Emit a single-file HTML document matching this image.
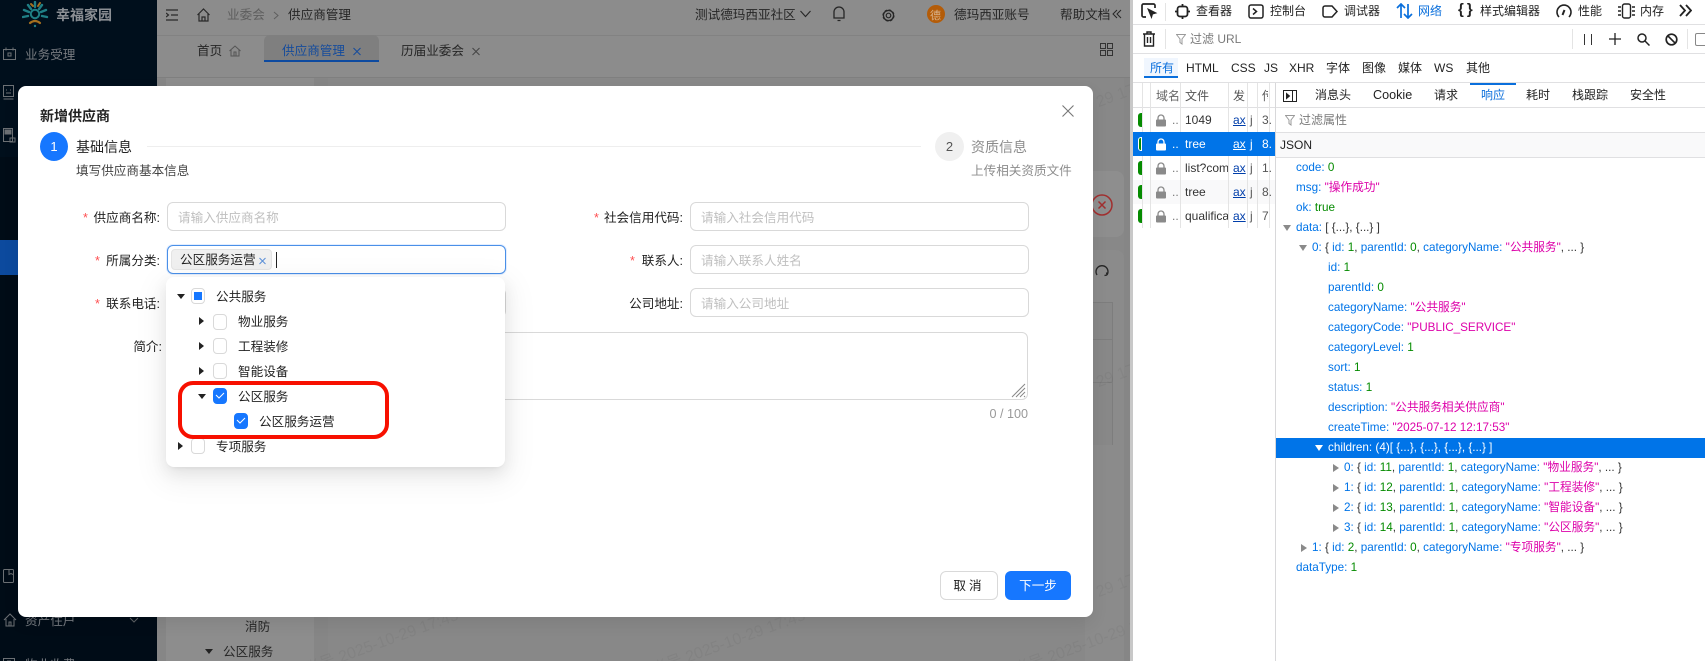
<!DOCTYPE html>
<html lang="zh"><head><meta charset="utf-8"><title>新增供应商</title>
<style>
*{box-sizing:border-box}
html,body{margin:0;padding:0;width:1705px;height:661px;overflow:hidden;background:#fff;font-family:"Liberation Sans","Noto Sans CJK SC",sans-serif}
#w{position:absolute;left:0;top:0;width:1705px;height:661px;overflow:hidden}
.a{position:absolute}
.t{position:absolute;white-space:nowrap;line-height:20px;height:20px;font-size:12.6px;color:#222;margin-top:1px}
.r{text-align:right}
.s{color:#ff4d4f}
.in{position:absolute;border:1px solid #d9d9d9;border-radius:6px;background:#fff}
.ph{color:#bfbfbf}
.cb{position:absolute;width:14px;height:16px;border:1px solid #d9d9d9;border-radius:4px;background:#fff}
.cb.on{background:#1677ff;border-color:#1677ff}
.ar{position:absolute;width:0;height:0}
.ar.d{border-left:4px solid transparent;border-right:4px solid transparent;border-top:5px solid #222}
.ar.g{border-top:4px solid transparent;border-bottom:4px solid transparent;border-left:5px solid #222}
.wm{position:absolute;white-space:nowrap;font-size:16px;color:rgba(0,0,0,.045);transform:rotate(-20deg);transform-origin:left top}
.t.d{font-size:12px;color:#222;margin-top:0}
.k{color:#0074e8}.n{color:#058b00}.v{color:#dd00a9}
.j{position:absolute;white-space:nowrap;font-size:11.7px;line-height:20px;height:20px;color:#0074e8}
.j span{color:#333}.j span.n{color:#058b00}.j span.v{color:#dd00a9}
.sel{color:#fff}
.vl{position:absolute;width:1px;background:#e4e4e4}
.hl{position:absolute;height:1px;background:#e0e0e2}
.tw{position:absolute;width:0;height:0;border-top:4.5px solid transparent;border-bottom:4.5px solid transparent;border-left:6px solid #8a8a8a}
.tb{position:absolute;width:0;height:0;border-left:4.5px solid transparent;border-right:4.5px solid transparent;border-top:6px solid #8a8a8a}
</style></head><body><div id="w">

<!-- app background -->
<div class="a" style="left:0;top:0;width:1130px;height:661px;background:#868686"></div>
<div class="a" style="left:0;top:0;width:157px;height:661px;background:#000c17"></div>
<div class="a" style="left:0;top:0;width:157px;height:157px;background:#000f1c"></div>
<div class="a" style="left:0;top:240px;width:157px;height:35px;background:#0c4a9e"></div>
<div class="a" style="left:157px;top:0;width:973px;height:36px;background:#8c8c8c;border-bottom:1px solid #828282"></div>
<div class="a" style="left:157px;top:36px;width:973px;height:42px;background:#8c8c8c;border-bottom:1px solid #7f7f7f"></div>
<div class="a" style="left:166px;top:78px;width:148px;height:583px;background:#8d8d8d"></div>
<div class="a" style="left:328px;top:78px;width:796px;height:583px;background:#888"></div>
<div class="a" style="left:1085px;top:171px;width:39px;height:66px;background:#8e8e8e;border-radius:0 8px 8px 0"></div>
<div class="a" style="left:1085px;top:250px;width:39px;height:411px;background:#8b8b8b;border-radius:0 8px 0 0"></div>
<div class="a" style="left:1085px;top:302px;width:28px;height:143px;border-right:1px solid #7d7d7d;background:#888"></div>
<div class="hl" style="left:1085px;top:302px;width:28px;background:#7d7d7d"></div>
<div class="hl" style="left:1085px;top:339px;width:28px;background:#7d7d7d"></div>
<div class="hl" style="left:1085px;top:382px;width:28px;background:#7d7d7d"></div>
<div class="wm" style="left:1094px;top:95px">29 17:45</div>
<div class="wm" style="left:1094px;top:375px">29 17:45</div>
<div class="wm" style="left:1094px;top:585px">29 17:45</div>
<div class="wm" style="left:270px;top:668px">西亚账号 2025-10-29 17:45</div>
<div class="wm" style="left:617px;top:668px">西亚账号 2025-10-29 17:45</div>
<div class="wm" style="left:979px;top:668px">西亚账号 2025-10-29 17:45</div>

<!-- sidebar -->
<svg class="a" style="left:22px;top:1px" width="28" height="27" viewBox="0 0 28 27" fill="none" stroke-linecap="round">
<circle cx="13" cy="13" r="4.2" stroke="#1f7f85" stroke-width="2"/>
<path d="M13 1v5M6 4l3 4M20 4l-3 4" stroke="#1f7f85" stroke-width="2.4"/>
<path d="M9 3l2 2M18 2l-2 3" stroke="#a5701f" stroke-width="2"/>
<path d="M2 9l5 2M1 16l5-1M24 9l-5 2M25 16l-5-1" stroke="#1f7f85" stroke-width="2.4"/>
<path d="M8 22q5-4 10 0" stroke="#a5701f" stroke-width="2.2"/>
<circle cx="13" cy="25" r="1.2" fill="#1f7f85"/>
</svg>
<div class="t" style="left:56px;top:4px;font-size:14px;font-weight:700;color:#8b8f94">幸福家园</div>
<svg class="a" style="left:3px;top:47px" width="14" height="14" fill="none" stroke="#6c7074"><rect x=".5" y="2.5" width="12" height="10"/><path d="M3 .5v3M10 .5v3M5 6h3v3H5z"/></svg>
<div class="t" style="left:25px;top:44px;color:#777b80">业务受理</div>
<svg class="a" style="left:3px;top:85px" width="12" height="16" fill="none" stroke="#6c7074"><rect x=".5" y=".5" width="10" height="11"/><path d="M3 5h1M7 5h1M3 8h5M.5 14h10"/></svg>
<svg class="a" style="left:3px;top:128px" width="13" height="15" fill="none" stroke="#6c7074"><path d="M.5.5h9v13h-9z"/><path d="M2 2h6v4H2z" fill="#6c7074"/><path d="M7 10h5v4H7z"/></svg>
<svg class="a" style="left:3px;top:569px" width="12" height="15" fill="none" stroke="#6c7074"><rect x=".5" y=".5" width="10" height="13" rx="1"/><path d="M6 .5v5l2-1 2 1"/></svg>

<svg class="a" style="left:3px;top:613px" width="14" height="14" fill="none" stroke="#6c7074"><path d="M1 7l6-6 6 6M3 6v7h8V6M6 13V9h2v4"/></svg>
<div class="t" style="left:25px;top:610px;color:#777b80">资产住户</div>
<svg class="a" style="left:129px;top:617px" width="10" height="6" fill="none" stroke="#5c6064"><path d="M1 1l4 4 4-4"/></svg>
<svg class="a" style="left:3px;top:658px" width="14" height="8" fill="none" stroke="#6c7074"><path d="M.5 7V.5h11V7M4 3h4"/></svg>
<div class="t" style="left:25px;top:654px;color:#777b80">物业收费</div>
<svg class="a" style="left:129px;top:661px" width="10" height="6" fill="none" stroke="#5c6064"><path d="M1 1l4 4 4-4"/></svg>

<!-- top bar -->
<svg class="a" style="left:166px;top:9px" width="13" height="12" fill="none" stroke="#2a2a2a" stroke-width="1.2"><path d="M0 1h12M5 6h7M0 11h12M0 4l2.500 2L0 8"/></svg>
<svg class="a" style="left:197px;top:8px" width="13" height="14" fill="none" stroke="#2a2a2a" stroke-width="1.2"><path d="M.5 7L6.500 1l6 6M2 6v7h9V6M5 13V9h3v4"/></svg>
<div class="t" style="left:227px;top:4px;color:#5e5e5e">业委会</div>
<svg class="a" style="left:273px;top:11px" width="7" height="9" fill="none" stroke="#5e5e5e"><path d="M1 1l4 3.500L1 8"/></svg>
<div class="t" style="left:288px;top:4px;color:#262626">供应商管理</div>
<div class="t" style="left:695px;top:4px;color:#262626">测试德玛西亚社区</div>
<svg class="a" style="left:800px;top:10px" width="11" height="8" fill="none" stroke="#262626" stroke-width="1.1"><path d="M.5 1l5 5.500 5-5.500"/></svg>
<svg class="a" style="left:833px;top:6px" width="12" height="16" fill="none" stroke="#262626" stroke-width="1.300"><path d="M1 12V6a5 5 0 0 1 10 0v6zM4.500 14.500h3M.5 12h11"/></svg>
<svg class="a" style="left:881px;top:8px" width="15" height="15" fill="none" stroke="#262626" stroke-width="1.200"><circle cx="7.500" cy="7.500" r="5.500" stroke-dasharray="3 1.300"/><circle cx="7.500" cy="7.500" r="5"/><circle cx="7.500" cy="7.500" r="2.300"/></svg>
<div class="a" style="left:927px;top:5px;width:18px;height:18px;border-radius:50%;background:#b45c08"></div>
<div class="t" style="left:930px;top:5px;width:12px;font-size:11px;color:#d9b48f">德</div>
<div class="t" style="left:954px;top:4px;color:#262626">德玛西亚账号</div>
<div class="t" style="left:1060px;top:4px;color:#262626">帮助文档</div>
<svg class="a" style="left:1112px;top:9px" width="10" height="10" fill="none" stroke="#262626"><path d="M5 1L1 5l4 4M9 1L5 5l4 4"/></svg>

<!-- tabs -->
<div class="t" style="left:197px;top:40px;color:#262626">首页</div>
<svg class="a" style="left:229px;top:45px" width="12" height="12" fill="none" stroke="#555"><path d="M.5 6L6 1l5.500 5M2 5v6h8V5M5 11V7h2v4"/></svg>
<div class="a" style="left:264px;top:35px;width:115px;height:27px;background:#7f7f7f;border-radius:6px 6px 0 0;border-bottom:2px solid #0d4aa0"></div>
<div class="t" style="left:282px;top:40px;color:#164c9c">供应商管理</div>
<svg class="a" style="left:353px;top:47px" width="8" height="9" fill="none" stroke="#164c9c"><path d="M.5 1l7 7M7.500 1l-7 7"/></svg>
<div class="t" style="left:401px;top:40px;color:#262626">历届业委会</div>
<svg class="a" style="left:472px;top:47px" width="8" height="9" fill="none" stroke="#444"><path d="M.5 1l7 7M7.500 1l-7 7"/></svg>
<svg class="a" style="left:1100px;top:43px" width="13" height="13" fill="none" stroke="#333"><rect x=".5" y=".5" width="5" height="5"/><rect x="7.500" y=".5" width="5" height="5"/><rect x=".5" y="7.500" width="5" height="5"/><rect x="7.500" y="7.500" width="5" height="5"/></svg>

<div class="t" style="left:245px;top:616px;color:#262626;font-size:12.600px">消防</div>
<div class="ar d" style="left:205px;top:649px;border-top-color:#222"></div>
<div class="t" style="left:223px;top:641px;color:#262626">公区服务</div>

<svg class="a" style="left:1092px;top:193px" width="22" height="24" fill="none" stroke="#a12f2f" stroke-width="1.500"><circle cx="10" cy="12" r="10"/><path d="M6.500 8.500l7 7M13.500 8.500l-7 7"/></svg>
<svg class="a" style="left:1095px;top:264px" width="14" height="15" fill="none" stroke="#262626" stroke-width="1.300"><path d="M2 11a6 6 0 1 1 10 0M12 11l-.5-2.500M12 11l-2.500.5"/></svg>

<!-- modal -->
<div class="a" style="left:18px;top:86px;width:1075px;height:531px;background:#fff;border-radius:8px;box-shadow:0 6px 16px rgba(0,0,0,.08)"></div>
<div class="t" style="left:40px;top:105px;font-size:14px;font-weight:700;color:#222">新增供应商</div>
<svg class="a" style="left:1062px;top:105px" width="12" height="12" fill="none" stroke="#777" stroke-width="1.100"><path d="M.5.5l11 11M11.500.5l-11 11"/></svg>

<div class="a" style="left:40px;top:132px;width:28px;height:29px;border-radius:50%;background:#1677ff"></div>
<div class="t" style="left:40px;top:137px;width:28px;text-align:center;color:#fff;font-size:13px;margin-top:0">1</div>
<div class="t" style="left:76px;top:137px;font-size:14px;color:#222;margin-top:0">基础信息</div>
<div class="t" style="left:76px;top:161px;color:#444;margin-top:0">填写供应商基本信息</div>
<div class="hl" style="left:147px;top:146px;width:774px;background:#eee"></div>
<div class="a" style="left:935px;top:132px;width:29px;height:29px;border-radius:50%;background:#f0f0f0"></div>
<div class="t" style="left:935px;top:137px;width:29px;text-align:center;color:#555;font-size:13px;margin-top:0">2</div>
<div class="t" style="left:971px;top:137px;font-size:14px;color:#8c8c8c;margin-top:0">资质信息</div>
<div class="t" style="left:971px;top:161px;color:#8c8c8c;margin-top:0">上传相关资质文件</div>

<!-- form left -->
<div class="t s" style="left:83px;top:207px">*</div>
<div class="t r" style="left:60px;top:207px;width:100px">供应商名称:</div>
<div class="in" style="left:167px;top:202px;width:339px;height:29px"></div>
<div class="t ph" style="left:178px;top:207px">请输入供应商名称</div>

<div class="t s" style="left:95px;top:250px">*</div>
<div class="t r" style="left:60px;top:250px;width:100px">所属分类:</div>
<div class="in" style="left:167px;top:245px;width:339px;height:29px;border-color:#4a90e8;box-shadow:0 0 0 1px rgba(22,119,255,.12)"></div>
<div class="a" style="left:171px;top:249px;width:101px;height:21px;background:#f0f0f0;border:1px solid #e4e4e4;border-radius:4px"></div>
<div class="t" style="left:180px;top:250px;margin-top:0">公区服务运营</div>
<svg class="a" style="left:259px;top:257px" width="7" height="8" fill="none" stroke="#5a8fd8"><path d="M.5 1l6 6M6.500 1l-6 6"/></svg>
<div class="a" style="left:276px;top:252px;width:1px;height:16px;background:#222"></div>

<div class="t s" style="left:95px;top:293px">*</div>
<div class="t r" style="left:60px;top:293px;width:100px">联系电话:</div>
<div class="in" style="left:167px;top:288px;width:339px;height:29px"></div>

<div class="t r" style="left:60px;top:336px;width:102px">简介:</div>
<div class="in" style="left:167px;top:332px;width:861px;height:68px"></div>
<svg class="a" style="left:1011px;top:383px" width="15" height="15" stroke="#888" stroke-width="1"><path d="M1 14L14 1M5 14l9-9M9 14l5-5M13 14l1-1"/></svg>
<div class="t r" style="left:928px;top:403px;width:100px;color:#999">0 / 100</div>

<!-- form right -->
<div class="t s" style="left:594px;top:207px">*</div>
<div class="t r" style="left:583px;top:207px;width:100px">社会信用代码:</div>
<div class="in" style="left:690px;top:202px;width:339px;height:29px"></div>
<div class="t ph" style="left:701px;top:207px">请输入社会信用代码</div>
<div class="t s" style="left:630px;top:250px">*</div>
<div class="t r" style="left:583px;top:250px;width:100px">联系人:</div>
<div class="in" style="left:690px;top:245px;width:339px;height:29px"></div>
<div class="t ph" style="left:701px;top:250px">请输入联系人姓名</div>
<div class="t r" style="left:583px;top:293px;width:100px">公司地址:</div>
<div class="in" style="left:690px;top:288px;width:339px;height:29px"></div>
<div class="t ph" style="left:701px;top:293px">请输入公司地址</div>

<!-- buttons -->
<div class="in" style="left:940px;top:571px;width:58px;height:29px;border-radius:6px"></div>
<div class="t" style="left:940px;top:575px;width:58px;text-align:center;letter-spacing:3px">取消</div>
<div class="a" style="left:1005px;top:571px;width:66px;height:29px;background:#1677ff;border-radius:6px"></div>
<div class="t" style="left:1005px;top:575px;width:66px;text-align:center;color:#fff">下一步</div>

<!-- dropdown -->
<div class="a" style="left:166px;top:277px;width:339px;height:190px;background:#fff;border-radius:8px;box-shadow:0 6px 16px rgba(0,0,0,.08),0 3px 6px -4px rgba(0,0,0,.12),0 9px 28px 8px rgba(0,0,0,.05)"></div>
<div class="ar d" style="left:177px;top:294px"></div>
<div class="cb" style="left:191px;top:288px"></div>
<div class="a" style="left:194px;top:292px;width:8px;height:8px;background:#1677ff"></div>
<div class="t" style="left:216px;top:286px">公共服务</div>
<div class="ar g" style="left:199px;top:317px"></div>
<div class="cb" style="left:213px;top:314px"></div>
<div class="t" style="left:238px;top:311px">物业服务</div>
<div class="ar g" style="left:199px;top:342px"></div>
<div class="cb" style="left:213px;top:338px"></div>
<div class="t" style="left:238px;top:336px">工程装修</div>
<div class="ar g" style="left:199px;top:367px"></div>
<div class="cb" style="left:213px;top:363px"></div>
<div class="t" style="left:238px;top:361px">智能设备</div>
<div class="ar d" style="left:198px;top:394px"></div>
<div class="cb on" style="left:213px;top:388px"></div>
<svg class="a" style="left:215px;top:391px" width="10" height="9" fill="none" stroke="#fff"><path d="M1 4l3 3 5-5"/></svg>
<div class="t" style="left:238px;top:386px">公区服务</div>
<div class="cb on" style="left:234px;top:413px"></div>
<svg class="a" style="left:236px;top:416px" width="10" height="9" fill="none" stroke="#fff"><path d="M1 4l3 3 5-5"/></svg>
<div class="t" style="left:259px;top:411px">公区服务运营</div>
<div class="ar g" style="left:178px;top:442px"></div>
<div class="cb" style="left:191px;top:438px"></div>
<div class="t" style="left:216px;top:436px">专项服务</div>
<div class="a" style="left:178px;top:381px;width:211px;height:58px;border:4px solid #f71000;border-radius:15px"></div>

<!-- devtools -->
<div class="a" style="left:1130px;top:0;width:575px;height:661px;background:#fff;border-left:3px solid #c8c8c8"></div>
<div class="hl" style="left:1133px;top:24px;width:572px"></div>
<div class="hl" style="left:1133px;top:53px;width:572px"></div>
<div class="hl" style="left:1133px;top:82px;width:572px"></div>

<svg class="a" style="left:1141px;top:3px" width="17" height="17" fill="none" stroke="#222" stroke-width="1.700"><path d="M5 14H2.500A1.500 1.500 0 0 1 1 12.500V2.500A1.500 1.500 0 0 1 2.500 1h10A1.500 1.500 0 0 1 14 2.500V5"/><path d="M7 6l8 4-3.500 1-1 3.500z" fill="#222" stroke-width="1"/></svg>
<div class="vl" style="left:1165px;top:3px;height:18px"></div>
<svg class="a" style="left:1175px;top:4px" width="15" height="15" fill="none" stroke="#222" stroke-width="1.800"><rect x="2.500" y="2.500" width="10" height="10" rx="2.500"/><path d="M7.500 0v2.500M7.500 12.500V15M0 7.500h2.500M12.500 7.500H15"/></svg>
<div class="t d" style="left:1196px;top:1px">查看器</div>
<svg class="a" style="left:1248px;top:4px" width="16" height="15" fill="none" stroke="#222" stroke-width="1.500"><rect x="1" y="1" width="14" height="13" rx="2"/><path d="M5 4.500l3.500 3-3.500 3"/></svg>
<div class="t d" style="left:1270px;top:1px">控制台</div>
<svg class="a" style="left:1322px;top:5px" width="16" height="13" fill="none" stroke="#222" stroke-width="1.500"><path d="M1 3a2 2 0 0 1 2-2h7l5 5.500L10 12H3a2 2 0 0 1-2-2z"/></svg>
<div class="t d" style="left:1344px;top:1px">调试器</div>
<svg class="a" style="left:1396px;top:3px" width="17" height="16" fill="none" stroke="#0a6fdc" stroke-width="1.700"><path d="M5 15V1M1 5l4-4 4 4M12 1v14M8 11l4 4 4-4"/></svg>
<div class="t d" style="left:1418px;top:1px;color:#0a6fdc">网络</div>
<div class="t" style="left:1458px;top:0;font-size:15px;font-weight:700;color:#222;letter-spacing:3px;width:22px;margin-top:0">{}</div>
<div class="t d" style="left:1480px;top:1px">样式编辑器</div>
<svg class="a" style="left:1556px;top:3px" width="16" height="15" fill="none" stroke="#222" stroke-width="1.600"><path d="M3 14A7 7 0 1 1 13 14"/><path d="M6.500 12l2-5" stroke-width="2"/></svg>
<div class="t d" style="left:1578px;top:1px">性能</div>
<svg class="a" style="left:1618px;top:3px" width="17" height="16" fill="none" stroke="#222" stroke-width="1.400"><rect x="4.500" y="1" width="8" height="14" rx="2"/><path d="M0 4h3M0 8h3M0 12h3M14 4h3M14 8h3M14 12h3"/></svg>
<div class="t d" style="left:1640px;top:1px">内存</div>
<svg class="a" style="left:1679px;top:4px" width="13" height="13" fill="none" stroke="#222" stroke-width="1.800"><path d="M1 1l5 5.500-5 5.500M7 1l5 5.500-5 5.500"/></svg>

<svg class="a" style="left:1143px;top:31px" width="12" height="16" fill="none" stroke="#222" stroke-width="1.400"><path d="M0 3h12M4 3V1h4v2M1.500 3v12h9V3M4.500 6v6M7.500 6v6"/></svg>
<div class="vl" style="left:1165px;top:29px;height:20px"></div>
<svg class="a" style="left:1176px;top:34px" width="10" height="11" fill="none" stroke="#9a9a9a"><path d="M.5.5h9L6 5v5L4 8.500V5z"/></svg>
<div class="t d" style="left:1190px;top:29px;color:#7a7a7a">过滤 URL</div>
<div class="vl" style="left:1572px;top:29px;height:20px"></div>
<svg class="a" style="left:1583px;top:34px" width="10" height="11" stroke="#333"><path d="M1.500 0v11M8.500 0v11"/></svg>
<svg class="a" style="left:1609px;top:33px" width="12" height="12" stroke="#222" stroke-width="1.300"><path d="M6 0v12M0 6h12"/></svg>
<svg class="a" style="left:1637px;top:33px" width="13" height="13" fill="none" stroke="#222" stroke-width="1.500"><circle cx="5" cy="5" r="4"/><path d="M8 8l4.500 4.500"/></svg>
<svg class="a" style="left:1665px;top:33px" width="13" height="13" fill="none" stroke="#222" stroke-width="1.700"><circle cx="6.500" cy="6.500" r="5.300"/><path d="M2.800 2.800l7.400 7.400"/></svg>
<div class="vl" style="left:1687px;top:29px;height:20px"></div>
<div class="a" style="left:1695px;top:33px;width:14px;height:13px;border:1px solid #888;border-radius:2px"></div>

<div class="a" style="left:1144px;top:58px;width:34px;height:20px;background:#f0f6fe;border-bottom:2px solid #0a6fdc"></div>
<div class="t d" style="left:1150px;top:58px;color:#0a6fdc">所有</div>
<div class="t d" style="left:1186px;top:58px">HTML</div>
<div class="t d" style="left:1231px;top:58px">CSS</div>
<div class="t d" style="left:1264px;top:58px">JS</div>
<div class="t d" style="left:1289px;top:58px">XHR</div>
<div class="t d" style="left:1326px;top:58px">字体</div>
<div class="t d" style="left:1362px;top:58px">图像</div>
<div class="t d" style="left:1398px;top:58px">媒体</div>
<div class="t d" style="left:1434px;top:58px">WS</div>
<div class="t d" style="left:1466px;top:58px">其他</div>

<!-- request table -->
<div class="a" style="left:1133px;top:180px;width:142px;height:24px;background:#f9f9fa"></div>
<div class="hl" style="left:1133px;top:107px;width:572px"></div>
<div class="vl" style="left:1142px;top:83px;height:145px"></div>
<div class="vl" style="left:1150px;top:83px;height:145px"></div>
<div class="vl" style="left:1180px;top:83px;height:145px"></div>
<div class="vl" style="left:1228px;top:83px;height:145px"></div>
<div class="vl" style="left:1247px;top:83px;height:145px"></div>
<div class="vl" style="left:1257px;top:83px;height:145px"></div>
<div class="vl" style="left:1269px;top:83px;height:145px"></div>
<div class="a" style="left:1133px;top:132px;width:142px;height:24px;background:#0074e8"></div>
<div class="vl" style="left:1275px;top:83px;height:578px;background:#d8d8da"></div>
<div class="t d" style="left:1156px;top:86px;color:#666;width:23px;overflow:hidden">域名</div>
<div class="t d" style="left:1185px;top:86px;color:#555">文件</div>
<div class="t d" style="left:1233px;top:86px;color:#555;width:12px;overflow:hidden">发起者</div>
<div class="t d" style="left:1262px;top:86px;color:#555;width:6px;overflow:hidden">传</div>

<div class="a" style="left:1138px;top:113px;width:4px;height:14px;background:#058b00;border-radius:3px 0 0 3px"></div>
<div class="a" style="left:1138px;top:137px;width:4px;height:14px;border:1px solid #fff;background:#058b00;border-radius:3px 0 0 3px"></div>
<div class="a" style="left:1138px;top:161px;width:4px;height:14px;background:#058b00;border-radius:3px 0 0 3px"></div>
<div class="a" style="left:1138px;top:185px;width:4px;height:14px;background:#058b00;border-radius:3px 0 0 3px"></div>
<div class="a" style="left:1138px;top:209px;width:4px;height:14px;background:#058b00;border-radius:3px 0 0 3px"></div>

<svg class="a" style="left:1156px;top:114px" width="10" height="13" fill="none"><path d="M2 6V4a3 3 0 0 1 6 0v2" stroke="#8a8a8a" stroke-width="1.300"/><rect y="5.500" width="10" height="7" rx="1" fill="#8a8a8a"/></svg>
<svg class="a" style="left:1156px;top:138px" width="10" height="13" fill="none"><path d="M2 6V4a3 3 0 0 1 6 0v2" stroke="#fff" stroke-width="1.300"/><rect y="5.500" width="10" height="7" rx="1" fill="#fff"/></svg>
<svg class="a" style="left:1156px;top:162px" width="10" height="13" fill="none"><path d="M2 6V4a3 3 0 0 1 6 0v2" stroke="#8a8a8a" stroke-width="1.300"/><rect y="5.500" width="10" height="7" rx="1" fill="#8a8a8a"/></svg>
<svg class="a" style="left:1156px;top:186px" width="10" height="13" fill="none"><path d="M2 6V4a3 3 0 0 1 6 0v2" stroke="#8a8a8a" stroke-width="1.300"/><rect y="5.500" width="10" height="7" rx="1" fill="#8a8a8a"/></svg>
<svg class="a" style="left:1156px;top:210px" width="10" height="13" fill="none"><path d="M2 6V4a3 3 0 0 1 6 0v2" stroke="#8a8a8a" stroke-width="1.300"/><rect y="5.500" width="10" height="7" rx="1" fill="#8a8a8a"/></svg>

<div class="t d" style="left:1185px;top:110px;color:#333">1049</div>
<div class="t d" style="left:1185px;top:134px;color:#fff">tree</div>
<div class="t d" style="left:1185px;top:158px;color:#333;width:43px;overflow:hidden">list?comm</div>
<div class="t d" style="left:1185px;top:182px;color:#333">tree</div>
<div class="t d" style="left:1185px;top:206px;color:#333;width:43px;overflow:hidden">qualification</div>

<div class="t d" style="left:1233px;top:110px;color:#003eaa;text-decoration:underline">ax</div>
<div class="t d" style="left:1233px;top:134px;color:#fff;text-decoration:underline">ax</div>
<div class="t d" style="left:1233px;top:158px;color:#003eaa;text-decoration:underline">ax</div>
<div class="t d" style="left:1233px;top:182px;color:#003eaa;text-decoration:underline">ax</div>
<div class="t d" style="left:1233px;top:206px;color:#003eaa;text-decoration:underline">ax</div>

<div class="t d" style="left:1250px;top:110px;color:#555">j</div>
<div class="t d" style="left:1250px;top:134px;color:#fff">j</div>
<div class="t d" style="left:1250px;top:158px;color:#555">j</div>
<div class="t d" style="left:1250px;top:182px;color:#555">j</div>
<div class="t d" style="left:1250px;top:206px;color:#555">j</div>
<div class="t d" style="left:1262px;top:110px;color:#555">3.</div>
<div class="t d" style="left:1262px;top:134px;color:#fff">8.</div>
<div class="t d" style="left:1262px;top:158px;color:#555">1.</div>
<div class="t d" style="left:1262px;top:182px;color:#555">8.</div>
<div class="t d" style="left:1262px;top:206px;color:#555">7</div>
<div class="t d" style="left:1172px;top:110px;color:#777">..</div>
<div class="t d" style="left:1172px;top:134px;color:#fff">..</div>
<div class="t d" style="left:1172px;top:158px;color:#777">..</div>
<div class="t d" style="left:1172px;top:182px;color:#777">..</div>
<div class="t d" style="left:1172px;top:206px;color:#777">..</div>

<!-- detail tabs -->
<svg class="a" style="left:1283px;top:90px" width="14" height="12" fill="none" stroke="#222"><rect x=".5" y=".5" width="13" height="11"/><path d="M9.500.5v11"/><path d="M3.500 3.500l3 2.500-3 2.500z" fill="#222"/></svg>
<div class="t d" style="left:1315px;top:85px">消息头</div>
<div class="t d" style="left:1373px;top:85px;font-size:12.6px">Cookie</div>
<div class="t d" style="left:1434px;top:85px">请求</div>
<div class="t d" style="left:1481px;top:85px;color:#0a6fdc">响应</div>
<div class="a" style="left:1470px;top:83px;width:46px;height:2px;background:#0a6fdc"></div>
<div class="t d" style="left:1526px;top:85px">耗时</div>
<div class="t d" style="left:1572px;top:85px">栈跟踪</div>
<div class="t d" style="left:1630px;top:85px">安全性</div>

<svg class="a" style="left:1285px;top:115px" width="10" height="11" fill="none" stroke="#9a9a9a"><path d="M.5.5h9L6 5v5L4 8.500V5z"/></svg>
<div class="t d" style="left:1299px;top:110px;color:#7a7a7a">过滤属性</div>
<div class="hl" style="left:1276px;top:132px;width:429px"></div>
<div class="a" style="left:1276px;top:133px;width:429px;height:24px;background:#f9f9fa"></div>
<div class="hl" style="left:1276px;top:157px;width:429px"></div>
<div class="t d" style="left:1280px;top:135px">JSON</div>

<!-- json tree -->
<div class="j" style="left:1296px;top:158px">code: <span class="n">0</span></div>
<div class="j" style="left:1296px;top:178px">msg: <span class="v">"操作成功"</span></div>
<div class="j" style="left:1296px;top:198px">ok: <span class="n">true</span></div>
<div class="tb" style="left:1283px;top:225px"></div>
<div class="j" style="left:1296px;top:218px">data: <span>[ {...}, {...} ]</span></div>
<div class="tb" style="left:1299px;top:245px"></div>
<div class="j" style="left:1312px;top:238px">0: <span>{</span> id: <span class="n">1</span><span>,</span> parentId: <span class="n">0</span><span>,</span> categoryName: <span class="v">"公共服务"</span><span>, ... }</span></div>
<div class="j" style="left:1328px;top:258px">id: <span class="n">1</span></div>
<div class="j" style="left:1328px;top:278px">parentId: <span class="n">0</span></div>
<div class="j" style="left:1328px;top:298px">categoryName: <span class="v">"公共服务"</span></div>
<div class="j" style="left:1328px;top:318px">categoryCode: <span class="v">"PUBLIC_SERVICE"</span></div>
<div class="j" style="left:1328px;top:338px">categoryLevel: <span class="n">1</span></div>
<div class="j" style="left:1328px;top:358px">sort: <span class="n">1</span></div>
<div class="j" style="left:1328px;top:378px">status: <span class="n">1</span></div>
<div class="j" style="left:1328px;top:398px">description: <span class="v">"公共服务相关供应商"</span></div>
<div class="j" style="left:1328px;top:418px">createTime: <span class="v">"2025-07-12 12:17:53"</span></div>
<div class="a" style="left:1276px;top:438px;width:429px;height:20px;background:#0074e8"></div>
<div class="tb" style="left:1315px;top:445px;border-top-color:#fff"></div>
<div class="j sel" style="left:1328px;top:438px;color:#fff">children: (4)[ {...}, {...}, {...}, {...} ]</div>
<div class="tw" style="left:1333px;top:464px"></div>
<div class="j" style="left:1344px;top:458px">0: <span>{</span> id: <span class="n">11</span><span>,</span> parentId: <span class="n">1</span><span>,</span> categoryName: <span class="v">"物业服务"</span><span>, ... }</span></div>
<div class="tw" style="left:1333px;top:484px"></div>
<div class="j" style="left:1344px;top:478px">1: <span>{</span> id: <span class="n">12</span><span>,</span> parentId: <span class="n">1</span><span>,</span> categoryName: <span class="v">"工程装修"</span><span>, ... }</span></div>
<div class="tw" style="left:1333px;top:504px"></div>
<div class="j" style="left:1344px;top:498px">2: <span>{</span> id: <span class="n">13</span><span>,</span> parentId: <span class="n">1</span><span>,</span> categoryName: <span class="v">"智能设备"</span><span>, ... }</span></div>
<div class="tw" style="left:1333px;top:524px"></div>
<div class="j" style="left:1344px;top:518px">3: <span>{</span> id: <span class="n">14</span><span>,</span> parentId: <span class="n">1</span><span>,</span> categoryName: <span class="v">"公区服务"</span><span>, ... }</span></div>
<div class="tw" style="left:1301px;top:544px"></div>
<div class="j" style="left:1312px;top:538px">1: <span>{</span> id: <span class="n">2</span><span>,</span> parentId: <span class="n">0</span><span>,</span> categoryName: <span class="v">"专项服务"</span><span>, ... }</span></div>
<div class="j" style="left:1296px;top:558px">dataType: <span class="n">1</span></div>

</div></body></html>
